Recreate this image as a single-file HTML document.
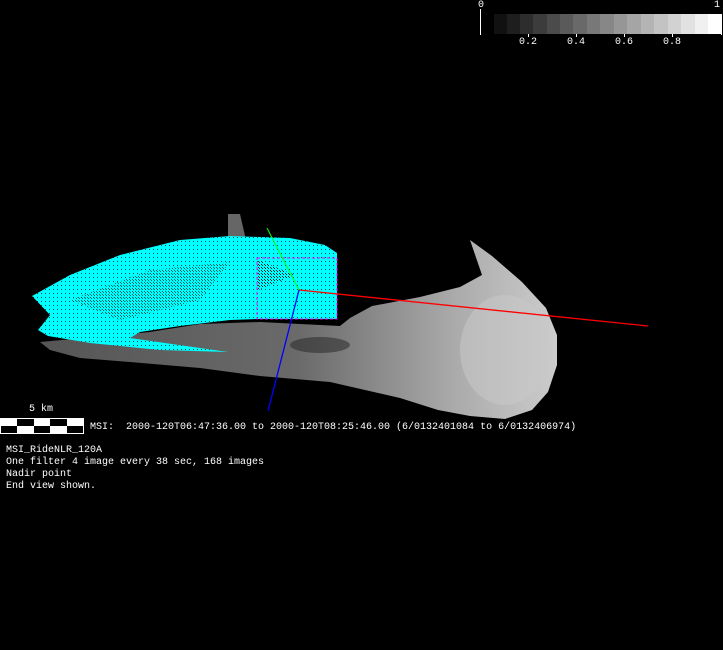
<!DOCTYPE html>
<html><head><meta charset="utf-8"><style>
html,body{margin:0;padding:0;background:#000;width:723px;height:650px;overflow:hidden}
.t{position:absolute;color:#fff;font-family:"Liberation Mono",monospace;font-size:10px;line-height:12px;white-space:pre}
</style></head><body>
<svg width="723" height="650" style="position:absolute;left:0;top:0">
<defs>
<linearGradient id="g" x1="0" x2="1" y1="0" y2="0">
<stop offset="0" stop-color="#555"/><stop offset="0.5" stop-color="#6a6a6a"/><stop offset="0.8" stop-color="#aaa"/><stop offset="1" stop-color="#ccc"/>
</linearGradient>
<pattern id="cp" width="4" height="4" patternUnits="userSpaceOnUse"><rect width="4" height="4" fill="#0ff"/><rect x="1" y="1" width="1" height="1" fill="#044"/></pattern>
<pattern id="cp2" width="3" height="3" patternUnits="userSpaceOnUse"><rect width="3" height="3" fill="#0ff"/><rect x="0" y="0" width="1" height="1" fill="#022"/><rect x="1" y="1" width="1" height="1" fill="#022"/></pattern>
</defs>
<g>
<rect x="494" y="14" width="14" height="20" fill="#111"/><rect x="507" y="14" width="14" height="20" fill="#1e1e1e"/>
<rect x="520" y="14" width="14" height="20" fill="#2d2d2d"/><rect x="533" y="14" width="14" height="20" fill="#3c3c3c"/>
<rect x="547" y="14" width="14" height="20" fill="#4b4b4b"/><rect x="560" y="14" width="14" height="20" fill="#5a5a5a"/>
<rect x="573" y="14" width="14" height="20" fill="#696969"/><rect x="587" y="14" width="14" height="20" fill="#787878"/>
<rect x="600" y="14" width="14" height="20" fill="#878787"/><rect x="614" y="14" width="14" height="20" fill="#969696"/>
<rect x="627" y="14" width="14" height="20" fill="#a5a5a5"/><rect x="641" y="14" width="14" height="20" fill="#b4b4b4"/>
<rect x="654" y="14" width="14" height="20" fill="#c3c3c3"/><rect x="668" y="14" width="14" height="20" fill="#d2d2d2"/>
<rect x="681" y="14" width="14" height="20" fill="#e1e1e1"/><rect x="695" y="14" width="14" height="20" fill="#f0f0f0"/>
<rect x="708" y="14" width="14" height="20" fill="#fff"/>
<rect x="480" y="9" width="1" height="26" fill="#fff"/><rect x="721" y="14" width="1" height="21" fill="#fff"/>
<rect x="528" y="34" width="1" height="3" fill="#fff"/><rect x="576" y="34" width="1" height="3" fill="#fff"/>
<rect x="624" y="34" width="1" height="3" fill="#fff"/><rect x="672" y="34" width="1" height="3" fill="#fff"/>
</g>
<!-- gray surface -->
<path d="M40,342 L150,332 L200,324 L260,322 L340,326 L350,318 L372,306 L420,297 L460,287 L482,275 L470,240 L492,256 L522,282 L546,308 L557,335 L557,365 L548,392 L532,410 L505,419 L470,416 L438,410 L400,398 L330,382 L260,376 L200,368 L130,362 L80,358 L50,350 Z" fill="url(#g)"/>
<path d="M228,214 L240,214 L246,240 L228,240 Z" fill="#666"/>
<ellipse cx="505" cy="350" rx="45" ry="55" fill="#c8c8c8" opacity="0.55"/>
<ellipse cx="320" cy="345" rx="30" ry="8" fill="#222" opacity="0.5"/>
<!-- cyan -->
<path d="M32,296 L70,275 L120,255 L180,240 L230,236 L290,238 L325,245 L337,253 L337,319 L257,319 L230,320 L180,326 L140,332 L130,338 L228,352 L160,350 L90,343 L48,336 L38,330 L50,315 Z" fill="url(#cp)"/>
<path d="M70,300 L150,270 L230,262 L200,300 L120,320 Z" fill="url(#cp2)" opacity="0.7"/>
<rect x="257" y="258" width="80" height="61" fill="none" stroke="#f0f" stroke-width="1" stroke-dasharray="3,2"/>
<path d="M258,260 L295,275 L258,290 Z" fill="url(#cp2)"/>
<line x1="299" y1="290" x2="648" y2="326" stroke="#f00" stroke-width="1.3"/>
<line x1="299" y1="290" x2="267" y2="228" stroke="#0f0" stroke-width="1"/>
<line x1="299" y1="290" x2="268" y2="411" stroke="#00f" stroke-width="1.3"/>
<rect x="0.5" y="418.5" width="83" height="15" fill="#000" stroke="#fff"/>
<g fill="#fff">
<rect x="0" y="418" width="17" height="8"/><rect x="34" y="418" width="16" height="8"/><rect x="67" y="418" width="17" height="8"/>
<rect x="17" y="426" width="17" height="8"/><rect x="50" y="426" width="17" height="8"/>
</g>
</svg>
<div class="t" style="left:478px;top:0px">0</div>
<div class="t" style="left:714px;top:0px">1</div>
<div class="t" style="left:519px;top:37px">0.2</div>
<div class="t" style="left:567px;top:37px">0.4</div>
<div class="t" style="left:615px;top:37px">0.6</div>
<div class="t" style="left:663px;top:37px">0.8</div>
<div class="t" style="left:29px;top:404px">5 km</div>
<div class="t" style="left:90px;top:422px">MSI:  2000-120T06:47:36.00 to 2000-120T08:25:46.00 (6/0132401084 to 6/0132406974)</div>
<div class="t" style="left:6px;top:445px">MSI_RideNLR_120A
One filter 4 image every 38 sec, 168 images
Nadir point
End view shown.</div>
</body></html>
